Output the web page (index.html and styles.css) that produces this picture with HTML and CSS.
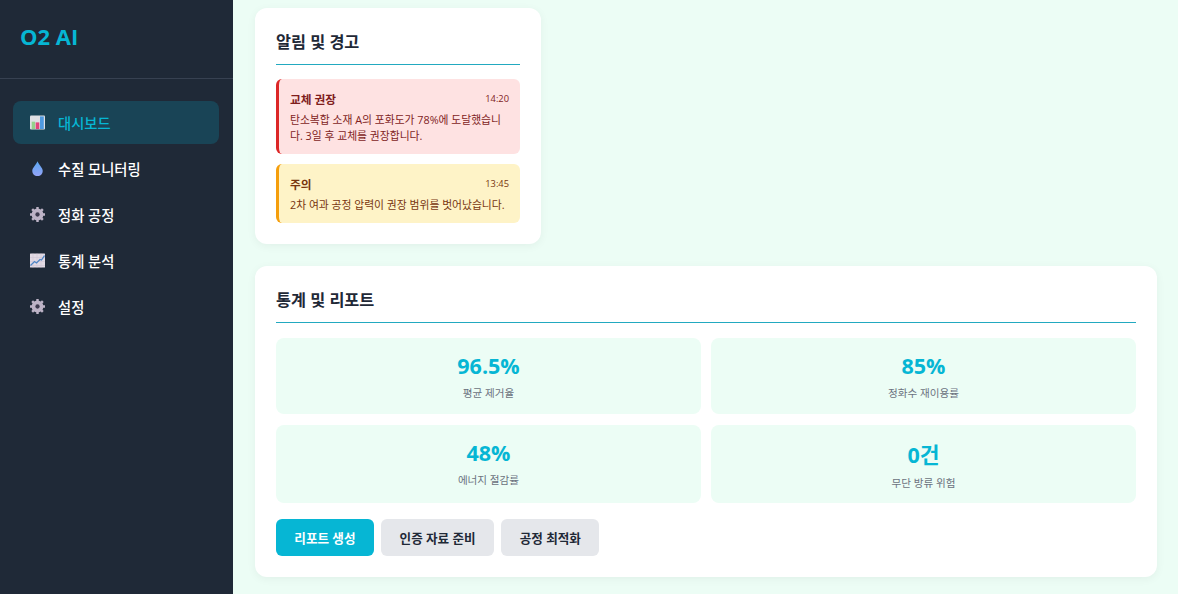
FILE: index.html
```html
<!DOCTYPE html>
<html lang="ko">
<head>
    <meta charset="UTF-8">
    <title>O2 AI</title>
    <link rel="stylesheet" href="styles.css">
</head>
<body>
    <aside class="sidebar">
        <div class="logo">O2 AI</div>
        <nav class="menu">
            <a class="menu-item active" href="#">
                <svg class="menu-icon" viewBox="0 0 15 15">
                    <rect x="0" y="0.5" width="15" height="14" rx="1" fill="#dfe0e4"/>
                    <rect x="1.7" y="6.7" width="3.4" height="7.3" fill="#93d08c"/>
                    <rect x="5.7" y="7.4" width="3.6" height="6.6" fill="#e0447c"/>
                    <rect x="10" y="1.4" width="3.8" height="12.6" fill="#4f9ae0"/>
                </svg>
                <span>대시보드</span>
            </a>
            <a class="menu-item" href="#">
                <svg class="menu-icon" viewBox="0 0 16 16">
                    <defs>
                        <linearGradient id="drop" x1="0" y1="0" x2="0" y2="1">
                            <stop offset="0" stop-color="#58a6f0"/>
                            <stop offset="1" stop-color="#94a3f7"/>
                        </linearGradient>
                    </defs>
                    <path d="M8 0.2C6.6 3.8 2.4 7.2 2.4 10.6a5.6 5.6 0 0 0 11.2 0C13.6 7.2 9.4 3.8 8 0.2z" fill="url(#drop)"/>
                </svg>
                <span>수질 모니터링</span>
            </a>
            <a class="menu-item" href="#">
                <svg class="menu-icon" viewBox="0 0 16 16">
                    <circle cx="8" cy="8" r="4.6" fill="none" stroke="#bdb3c6" stroke-width="3.4"/>
                    <path d="M8 0V16M0 8H16M2.3 2.3L13.7 13.7M13.7 2.3L2.3 13.7" stroke="#bdb3c6" stroke-width="2.6"/>
                    <circle cx="8" cy="8" r="2.3" fill="#3d3a4e"/>
                </svg>
                <span>정화 공정</span>
            </a>
            <a class="menu-item" href="#">
                <svg class="menu-icon" viewBox="0 0 15 15">
                    <rect x="0" y="0.5" width="15" height="14" rx="0.5" fill="#e2dae4"/>
                    <path d="M3 0.5V14.5M7 0.5V14.5M11 0.5V14.5M0 4.5H15M0 8.5H15M0 12.5H15" stroke="#cdc3d2" stroke-width="0.5"/>
                    <path d="M0.5 12.5L4.5 8.5L6.5 10L10 6.5L11.5 7L14.5 2.5" fill="none" stroke="#4f86c6" stroke-width="1.3"/>
                </svg>
                <span>통계 분석</span>
            </a>
            <a class="menu-item" href="#">
                <svg class="menu-icon" viewBox="0 0 16 16">
                    <circle cx="8" cy="8" r="4.6" fill="none" stroke="#bdb3c6" stroke-width="3.4"/>
                    <path d="M8 0V16M0 8H16M2.3 2.3L13.7 13.7M13.7 2.3L2.3 13.7" stroke="#bdb3c6" stroke-width="2.6"/>
                    <circle cx="8" cy="8" r="2.3" fill="#3d3a4e"/>
                </svg>
                <span>설정</span>
            </a>
        </nav>
    </aside>

    <main class="content">
        <section class="card alerts-card">
            <h2 class="card-title">알림 및 경고</h2>
            <div class="alert alert-danger">
                <div class="alert-head">
                    <strong>교체 권장</strong>
                    <span class="alert-time">14:20</span>
                </div>
                <p>탄소복합 소재 A의 포화도가 78%에 도달했습니다. 3일 후 교체를 권장합니다.</p>
            </div>
            <div class="alert alert-warning">
                <div class="alert-head">
                    <strong>주의</strong>
                    <span class="alert-time">13:45</span>
                </div>
                <p>2차 여과 공정 압력이 권장 범위를 벗어났습니다.</p>
            </div>
        </section>

        <section class="card">
            <h2 class="card-title">통계 및 리포트</h2>
            <div class="stats">
                <div class="stat">
                    <div class="stat-value">96.5%</div>
                    <div class="stat-label">평균 제거율</div>
                </div>
                <div class="stat">
                    <div class="stat-value">85%</div>
                    <div class="stat-label">정화수 재이용률</div>
                </div>
                <div class="stat">
                    <div class="stat-value">48%</div>
                    <div class="stat-label">에너지 절감률</div>
                </div>
                <div class="stat">
                    <div class="stat-value stat-value-tall">0건</div>
                    <div class="stat-label">무단 방류 위험</div>
                </div>
            </div>
            <div class="actions">
                <button class="btn btn-primary">리포트 생성</button>
                <button class="btn">인증 자료 준비</button>
                <button class="btn">공정 최적화</button>
            </div>
        </section>
    </main>
</body>
</html>
```

FILE: styles.css
```css
* {
    box-sizing: border-box;
}

html, body {
    height: 100%;
}

body {
    margin: 0;
    display: flex;
    overflow: hidden;
    background-color: #ecfdf5;
    color: #1f2937;
    font-family: "Open Sans", "Noto Sans CJK KR", sans-serif;
}

.sidebar {
    width: 233px;
    flex-shrink: 0;
    background-color: #1f2937;
    color: white;
}

.logo {
    height: 79px;
    padding: 20px 20px 0;
    border-bottom: 1px solid #374151;
    color: #06b6d4;
    font-size: 22px;
    font-weight: 700;
    line-height: 33px;
}

.menu {
    display: flex;
    flex-direction: column;
    gap: 3.2px;
    padding: 22px 14px 0 13px;
}

.menu-item {
    display: flex;
    align-items: center;
    gap: 13px;
    height: 43px;
    padding: 0 0 1px 17px;
    border-radius: 8px;
    color: white;
    font-size: 14.3px;
    font-weight: 500;
    text-decoration: none;
}

.menu-item.active {
    background-color: rgba(6, 182, 212, 0.2);
    color: #06b6d4;
}

.menu-icon {
    width: 15px;
    height: 15px;
    flex-shrink: 0;
}

.content {
    flex: 1;
    padding: 8px 21px 0 22px;
}

.card {
    padding: 21px;
    margin-bottom: 22px;
    background: white;
    border-radius: 12px;
    box-shadow: 0 2px 10px rgba(0, 0, 0, 0.05);
}

.alerts-card {
    width: 286px;
}

.card-title {
    margin: 0 0 14px;
    height: 36px;
    border-bottom: 1px solid #22a9c0;
    font-size: 16.3px;
    font-weight: 700;
    line-height: 26px;
}

.alert {
    padding: 9px 11px 10px 11px;
    margin-bottom: 10px;
    border-left: 3px solid;
    border-radius: 6px;
    font-size: 10.8px;
}

.alert:last-child {
    margin-bottom: 0;
}

.alert p {
    margin: 0;
    line-height: 16px;
}

.alert-head {
    display: flex;
    justify-content: space-between;
    align-items: center;
    height: 20px;
    margin-bottom: 4px;
}

.alert-head strong {
    font-size: 11.7px;
}

.alert-time {
    font-size: 9.3px;
}

.alert-danger {
    background-color: #fee2e2;
    border-color: #dc2626;
    color: #7f1d1d;
}

.alert-warning {
    background-color: #fef3c7;
    border-color: #f59e0b;
    color: #78350f;
}

.stats {
    display: grid;
    grid-template-columns: 1fr 1fr;
    gap: 11px 10px;
    margin-top: 15px;
}

.stat {
    height: 76px;
    padding-top: 13px;
    background-color: #ecfdf5;
    border-radius: 8px;
    text-align: center;
}

.stat:nth-child(n+3) {
    height: 78px;
}

.stat-value {
    color: #06b6d4;
    font-size: 21.5px;
    font-weight: 700;
    line-height: 30px;
}

.stat-value-tall {
    line-height: 33px;
}

.stat-label {
    margin-top: 4px;
    color: #6b7280;
    font-size: 10.6px;
    line-height: 16px;
}

.actions {
    display: flex;
    gap: 7.5px;
    margin-top: 16px;
}

.btn {
    height: 37px;
    padding: 0 18.3px;
    background-color: #e5e7eb;
    border: none;
    border-radius: 6px;
    color: #1f2937;
    font-family: inherit;
    font-size: 12.6px;
    font-weight: 700;
    cursor: pointer;
}

.btn-primary {
    background-color: #06b6d4;
    color: white;
}
```
